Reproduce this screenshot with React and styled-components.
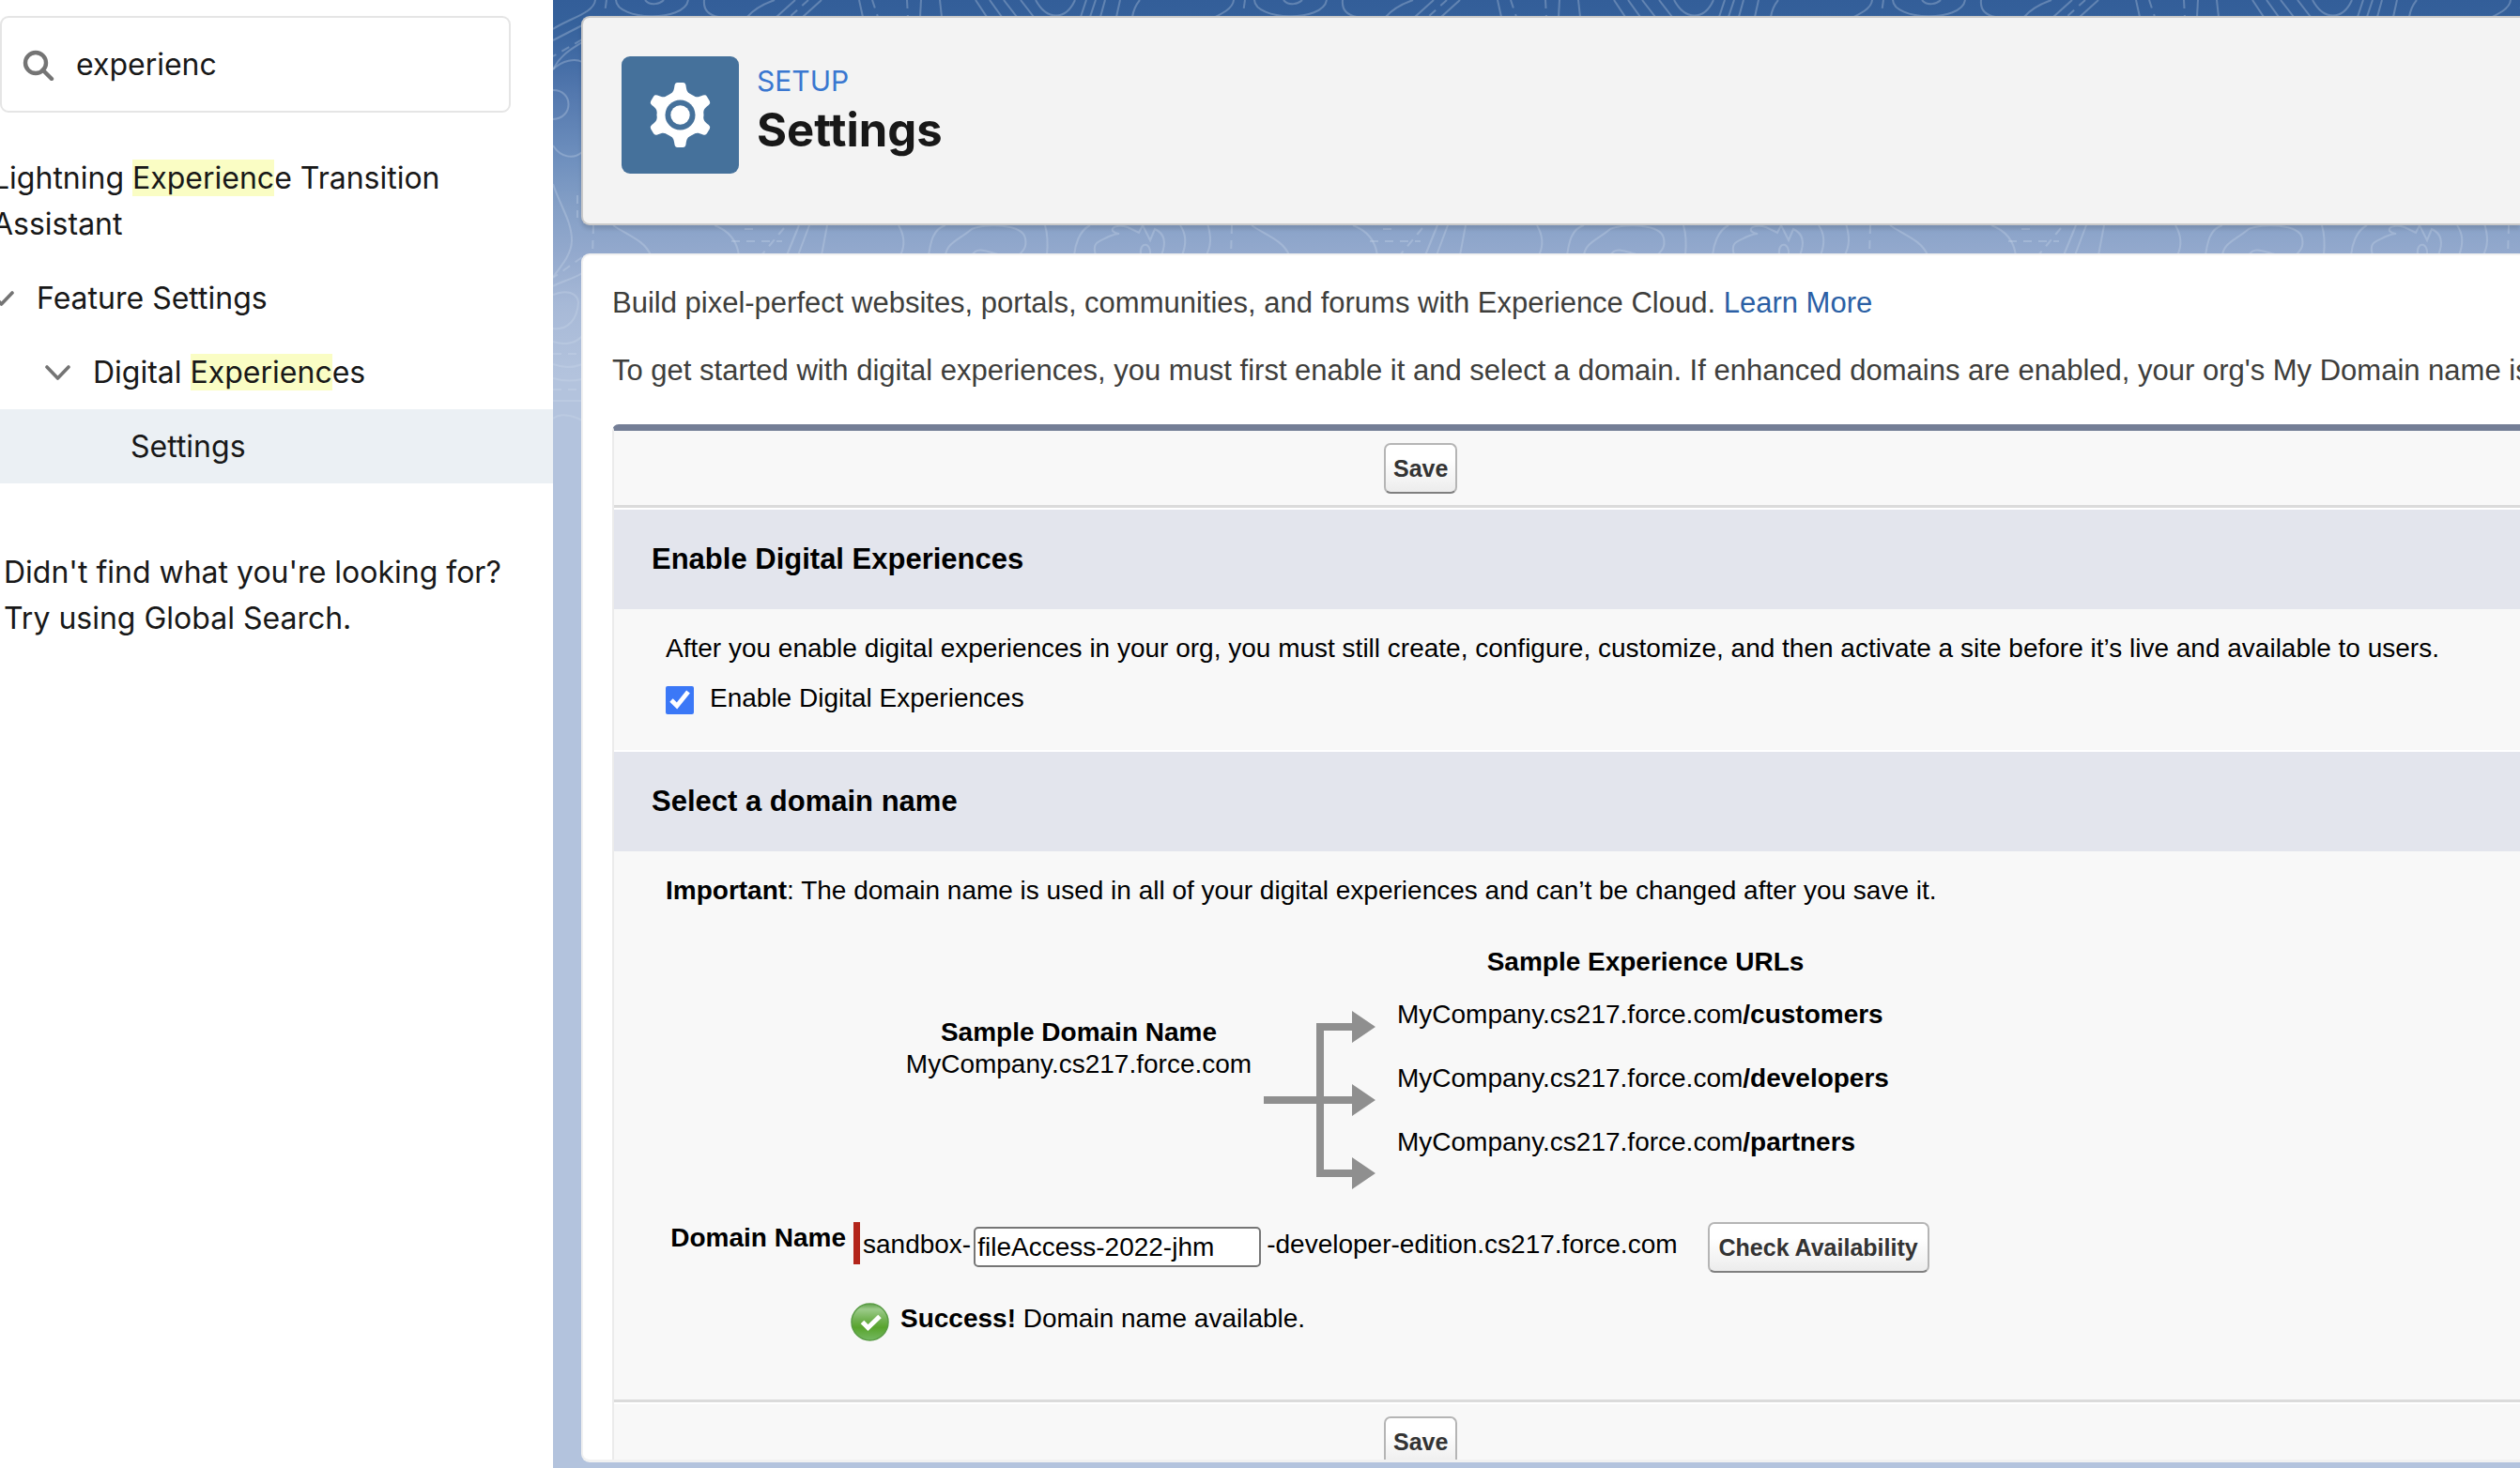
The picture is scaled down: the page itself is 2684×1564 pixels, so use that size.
import React from "react";
import styled, { createGlobalStyle } from "styled-components";

const uiFont = '"Inter", "Open Sans", sans-serif';
const formFont = '"Liberation Sans", Arial, sans-serif';

const GlobalStyle = createGlobalStyle`
  *, *::before, *::after { box-sizing: border-box; }
  body { margin: 0; overflow: hidden; font-family: ${uiFont}; color: #181818; background: #fff; }
  h1, h2, p, ul { margin: 0; padding: 0; }
`;

const Page = styled.div`
  display: flex;
  height: 100vh;
  overflow: hidden;
`;

/* ---------- sidebar ---------- */

const Sidebar = styled.aside`
  flex: 0 0 589px;
  padding-top: 17px;
  overflow: hidden;
  background: #fff;
  font-size: 32px;
  line-height: 49px;
`;

const SearchBox = styled.label`
  display: flex;
  align-items: center;
  gap: 23px;
  height: 103px;
  margin-right: 45px;
  padding: 0 22px;
  border: 2px solid #e5e5e5;
  border-radius: 9px;
`;

const SearchInput = styled.input`
  flex: 1;
  min-width: 0;
  padding: 0;
  border: 0;
  outline: 0;
  background: transparent;
  color: #181818;
  font: 32px/40px ${uiFont};
`;

const Tree = styled.ul`
  margin: 30px 0 0 -12px;
  list-style: none;
`;

const TreeItem = styled.li`
  background: ${(p) => (p.$active ? "#ebf0f4" : "transparent")};
`;

const TreeLink = styled.a`
  display: flex;
  align-items: center;
  gap: 24px;
  padding: 15px 60px 15px ${(p) => p.$indent}px;
  color: inherit;
  text-decoration: none;
`;

const Mark = styled.mark`
  background: #fafdc4;
  color: inherit;
`;

const Hint = styled.p`
  margin-top: 70px;
  padding-left: 4px;
`;

/* ---------- main area ---------- */

const Main = styled.main`
  position: relative;
  flex: 1;
  min-width: 0;
  display: flex;
  flex-direction: column;
  gap: 30px;
  padding: 17px 0 6px 30px;
  background: #b3c3dd linear-gradient(#335e99 0, #35619b 24px, #436ca5 64px, #5378ae 100px, #6f90be 170px, #849fc6 220px, #93a9cd 270px, #a7b9d7 325px, #b3c3dd 400px) no-repeat;
`;

const Contours = styled.svg`
  position: absolute;
  inset: 0 0 auto 0;
  width: 100%;
  height: 460px;
`;

const Header = styled.header`
  position: relative;
  display: flex;
  gap: 19px;
  padding: 41px 41px 53px;
  border: 2px solid #c9c9c9;
  border-right: 0;
  border-radius: 9px 0 0 9px;
  background: #f3f3f3;
  box-shadow: 0 4px 4px rgba(0, 0, 0, 0.12);
`;

const Tile = styled.div`
  flex: 0 0 125px;
  height: 125px;
  border-radius: 9px;
  background: #45719b;
`;

const Titles = styled.div`
  padding-top: 4px;
`;

const Eyebrow = styled.p`
  color: #3a77d0;
  font-size: 30px;
  line-height: 44px;
`;

const Title = styled.h1`
  font-size: 49px;
  line-height: 62px;
  font-weight: 700;
`;

const Card = styled.section`
  position: relative;
  flex: 1;
  min-height: 0;
  overflow: hidden;
  padding: 33px 0 0 31px;
  border: 2px solid #f1f1f1;
  border-right: 0;
  border-bottom-width: 3px;
  border-radius: 9px 0 0 9px;
  background: #fff;
  font-family: ${formFont};
  color: #000;
`;

const Intro = styled.p`
  margin-bottom: 36px;
  color: #3e3e3c;
  font-size: 31px;
  line-height: 36px;
  white-space: nowrap;
`;

const Link = styled.a`
  color: #2b5fa5;
  text-decoration: none;
`;

const Panel = styled.form`
  margin-top: 39px;
  border-top: 7px solid #747e96;
  border-left: 2px solid #ebebeb;
  border-radius: 7px 0 0 0;
  background: #f8f8f8;
  font-size: 28px;
  line-height: 34px;
`;

const ButtonRow = styled.div`
  display: grid;
  grid-template-columns: 2fr 3fr;
  padding: 13px 0 12px;
`;

const ButtonCell = styled.div`
  grid-column: 2;
  padding-left: 8px;
`;

const Button = styled.button`
  height: 54px;
  padding: 0 ${(p) => (p.$wide ? 10 : 8)}px;
  border: 2px solid #b5b5b5;
  border-bottom-color: #7f7f7f;
  border-radius: 7px;
  background: linear-gradient(#fff 30%, #ececec);
  color: #333;
  font: 700 25px/34px ${formFont};
  white-space: nowrap;
`;

const Rule = styled.div`
  height: 5px;
  border-top: 3px solid #dbdbdb;
  background: #fff;
`;

const Band = styled.h2`
  padding: 35px 40px;
  background: #e3e5ed;
  font-size: 31px;
  line-height: 36px;
  font-weight: 700;
`;

const SectionBody = styled.div`
  padding: 25px 55px ${(p) => p.$bottom}px;
  border-bottom: ${(p) => (p.$divided ? "2px solid #fff" : "0")};
`;

const CheckLabel = styled.label`
  display: flex;
  align-items: flex-end;
  gap: 17px;
  margin-top: 19px;
`;

const Checkbox = styled.input`
  width: 30px;
  height: 30px;
  margin: 0;
  accent-color: #3b78f7;
`;

const Diagram = styled.div`
  display: grid;
  grid-template-columns: 372px 122px 560px;
  margin: 42px 0 34px;
  padding-left: 254px;
`;

const SampleDomain = styled.div`
  padding-top: 75px;
  text-align: center;
`;

const Arrows = styled.svg`
  width: 122px;
  height: 192px;
  margin: 68px 0 0 9px;
`;

const SampleUrls = styled.div`
  display: flex;
  flex-direction: column;
  gap: 34px;
  padding-left: 31px;
`;

const SampleHeading = styled.p`
  margin-bottom: -12px;
  text-align: center;
  font-weight: 700;
`;

const DomainRow = styled.div`
  display: flex;
  align-items: flex-start;
`;

const DomainLabel = styled.label`
  width: 207px;
  padding-right: 8px;
  border-right: 7px solid #b3251b;
  height: 45px;
  text-align: right;
  font-weight: 700;
`;

const Affix = styled.span`
  padding: 7px ${(p) => p.$after}px 0 ${(p) => p.$before}px;
`;

const DomainInput = styled.input`
  width: 306px;
  height: 43px;
  margin-top: 5px;
  padding: 0 2px;
  border: 2px solid #767676;
  border-radius: 5px;
  background: #fff;
  color: #000;
  font: 28px/34px ${formFont};
`;

const Status = styled.p`
  display: flex;
  gap: 12px;
  margin: 32px 0 0 197px;
`;

/* ---------- drawings ---------- */

const SearchIcon = () => (
  <svg width="34" height="34" viewBox="0 0 34 34" fill="none" stroke="#747474" strokeWidth="4.4">
    <circle cx="14" cy="15" r="11" />
    <path d="M21.5 22.5 31 32" strokeLinecap="round" />
  </svg>
);

const Chevron = () => (
  <svg width="27" height="17" viewBox="0 0 27 17" fill="none" stroke="#747474" strokeWidth="3.6" strokeLinecap="round" strokeLinejoin="round">
    <path d="M2 3 13.500 15 25 3" />
  </svg>
);

const Gear = () => (
  <svg width="125" height="125" viewBox="-62.5 -62.5 125 125">
    <g fill="#fff">
      <circle r="25" />
      {[0, 60, 120, 180, 240, 300].map((a) => (
        <path
          key={a}
          transform={`rotate(${a})`}
          d="M-13 -20C-7 -25 -7 -25 -6 -31.500Q-5.500 -34.500 -3 -34.500H3Q5.500 -34.500 6 -31.500C7 -25 7 -25 13 -20Z"
        />
      ))}
    </g>
    <circle r="16" fill="#45719b" />
    <circle r="10.200" fill="#fff" />
  </svg>
);

const solidLines = [
  "M45 0C44 14 16 20 0 31", "M31 27 0 43", "M31 45C20 52 8 58 0 74",
  "M67 0C68 22 140 24 144 0", "M98 0C104 7 114 4 118 0", "M161 0C160 10 166 16 176 18",
  "M236 0C222 5 212 12 207 18", "M258 0 238 18", "M286 0 266 18", "M326 0 330 18",
  "M392 0 391 18", "M412 0 414 18", "M450 0 462 18", "M465 0 478 18", "M480 0 494 18",
  "M498 0 512 18", "M514 0C526 22 546 22 556 0", "M568 0 562 18", "M578 0 572 18",
  "M588 0 583 18", "M604 0 600 18", "M625 0C620 6 618 12 617 18",
  "M0 74C10 64 24 62 31 66", "M0 96C22 96 22 126 0 127", "M0 155C8 168 22 170 31 162",
  "M0 196C8 220 20 236 20 256C20 270 10 282 0 295", "M31 291C20 298 8 300 0 305",
  "M0 314C14 308 26 312 27 322C26 340 16 352 0 350", "M0 364C12 368 24 366 31 358",
  "M0 388C10 392 22 392 31 388", "M0 403C10 406 22 406 31 404", "M0 427H31",
  "M0 446C8 440 20 442 31 448",
  "M64 240C78 250 98 256 104 272", "M172 240C188 246 196 258 198 272",
  "M262 240 249 272", "M273 240 261 272", "M292 240 286 272",
  "M368 240C375 252 375 262 370 272", "M418 240C404 244 402 260 400 272",
  "M418 272C420 258 432 256 446 244C460 238 500 238 503 254C505 264 500 268 496 272",
  "M446 272C452 262 462 268 474 271", "M524 240C527 250 527 262 526 272",
  "M572 240C560 246 556 262 555 272",
  "M578 272C574 258 580 258 592 252C608 246 602 252 596 246C594 240 606 240 612 242L624 248 628 240 636 256 641 244C654 250 652 262 648 272",
  "M626 272C624 256 638 258 636 272", "M668 240C675 250 674 262 670 272",
];

const dashedLines = [
  "M31 42 0 60", "M57 0 55 14", "M272 0 252 18", "M340 0 346 18", "M377 0 378 18",
  "M43 240 42 272", "M26 208V232", "M31 274 0 296", "M0 377H31", "M0 415H31",
  "M190 257H244", "M204 244H220", "M246 243 222 272", "M688 240 686 272",
];

const ContourBackdrop = () => (
  <Contours aria-hidden="true">
    <defs>
      <pattern id="contours" width="680" height="460" patternUnits="userSpaceOnUse">
        <g fill="none" stroke="#cfdcee" strokeOpacity="0.3" strokeWidth="2">
          {solidLines.map((d) => <path key={d} d={d} />)}
          <g strokeDasharray="9 7">
            {dashedLines.map((d) => <path key={d} d={d} />)}
          </g>
        </g>
      </pattern>
    </defs>
    <rect width="100%" height="460" fill="url(#contours)" />
  </Contours>
);

const BranchArrows = () => (
  <Arrows viewBox="0 0 122 192" fill="#8f8f8f" aria-hidden="true">
    <path d="M2 92H100V100H2ZM58 14H66V178H58ZM58 14H100V22H58ZM58 170H100V178H58Z" />
    <path d="M96 1 121 18 96 35ZM96 79 121 96 96 113ZM96 157 121 174 96 191Z" />
  </Arrows>
);

const SuccessIcon = () => (
  <svg width="41" height="41" viewBox="0 0 41 41" aria-hidden="true">
    <defs>
      <linearGradient id="ok" x1="0" y1="0" x2="0" y2="1">
        <stop offset="0" stopColor="#5fa04a" />
        <stop offset="0.150" stopColor="#9ccb8a" />
        <stop offset="0.450" stopColor="#6fb04e" />
        <stop offset="0.650" stopColor="#58a42c" />
        <stop offset="1" stopColor="#74b862" />
      </linearGradient>
    </defs>
    <circle cx="20.500" cy="20.500" r="19.500" fill="url(#ok)" stroke="#5a9c45" strokeWidth="1.500" />
    <path d="M12.500 20.500 18.500 26.500 31 14.500" fill="none" stroke="#fff" strokeWidth="5" />
  </svg>
);

/* ---------- page ---------- */

const sites = ["customers", "developers", "partners"];

export default function App() {
  return (
    <Page>
      <GlobalStyle />
      <Sidebar>
        <SearchBox>
          <SearchIcon />
          <SearchInput type="text" aria-label="Quick Find" defaultValue="experienc" />
        </SearchBox>
        <nav>
          <Tree>
            <TreeItem>
              <TreeLink href="#assistant" $indent={4}>
                <span>Lightning <Mark>Experienc</Mark>e Transition Assistant</span>
              </TreeLink>
            </TreeItem>
            <TreeItem>
              <TreeLink href="#features" $indent={0}>
                <Chevron />
                <span>Feature Settings</span>
              </TreeLink>
            </TreeItem>
            <TreeItem>
              <TreeLink href="#experiences" $indent={60}>
                <Chevron />
                <span>Digital <Mark>Experienc</Mark>es</span>
              </TreeLink>
            </TreeItem>
            <TreeItem $active>
              <TreeLink href="#settings" $indent={151} aria-current="page">Settings</TreeLink>
            </TreeItem>
          </Tree>
        </nav>
        <Hint>
          Didn't find what you're looking for?
          <br />
          Try using Global Search.
        </Hint>
      </Sidebar>

      <Main>
        <ContourBackdrop />
        <Header>
          <Tile><Gear /></Tile>
          <Titles>
            <Eyebrow>SETUP</Eyebrow>
            <Title>Settings</Title>
          </Titles>
        </Header>

        <Card>
          <Intro>
            Build pixel-perfect websites, portals, communities, and forums with Experience Cloud.{" "}
            <Link href="#learn">Learn More</Link>
          </Intro>
          <Intro>
            To get started with digital experiences, you must first enable it and select a domain. If enhanced
            domains are enabled, your org's My Domain name is
          </Intro>

          <Panel onSubmit={(e) => e.preventDefault()}>
            <ButtonRow>
              <ButtonCell><Button type="submit">Save</Button></ButtonCell>
            </ButtonRow>
            <Rule />
            <Band>Enable Digital Experiences</Band>
            <SectionBody $bottom={38} $divided>
              <p>
                After you enable digital experiences in your org, you must still create, configure, customize, and
                then activate a site before it’s live and available to users.
              </p>
              <CheckLabel>
                <Checkbox type="checkbox" defaultChecked />
                Enable Digital Experiences
              </CheckLabel>
            </SectionBody>

            <Band>Select a domain name</Band>
            <SectionBody $bottom={62}>
              <p>
                <b>Important</b>: The domain name is used in all of your digital experiences and can’t be changed
                after you save it.
              </p>
              <Diagram>
                <SampleDomain>
                  <p><b>Sample Domain Name</b></p>
                  <p>MyCompany.cs217.force.com</p>
                </SampleDomain>
                <BranchArrows />
                <SampleUrls>
                  <SampleHeading>Sample Experience URLs</SampleHeading>
                  {sites.map((site) => (
                    <p key={site}>MyCompany.cs217.force.com<b>/{site}</b></p>
                  ))}
                </SampleUrls>
              </Diagram>
              <DomainRow>
                <DomainLabel htmlFor="domain">Domain Name</DomainLabel>
                <Affix $before={3} $after={3}>sandbox-</Affix>
                <DomainInput id="domain" type="text" defaultValue="fileAccess-2022-jhm" />
                <Affix $before={6} $after={32}>-developer-edition.cs217.force.com</Affix>
                <Button type="button" $wide>Check Availability</Button>
              </DomainRow>
              <Status>
                <SuccessIcon />
                <span><b>Success!</b> Domain name available.</span>
              </Status>
            </SectionBody>
            <Rule />
            <ButtonRow>
              <ButtonCell><Button type="submit">Save</Button></ButtonCell>
            </ButtonRow>
          </Panel>
        </Card>
      </Main>
    </Page>
  );
}
